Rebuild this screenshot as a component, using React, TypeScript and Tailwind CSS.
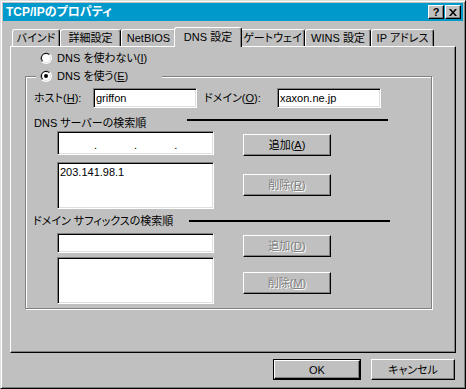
import React from "react";

const raised =
  "border border-t-white border-l-white border-r-black border-b-black shadow-[inset_-1px_-1px_0_#808080]";
const sunken =
  "border border-t-[#808080] border-l-[#808080] border-r-white border-b-white shadow-[inset_1px_1px_0_#000,inset_-1px_-1px_0_#dfdfdf] bg-white";

const Radio: React.FC<{ checked?: boolean }> = ({ checked }) => (
  <svg width="12" height="12" viewBox="0 0 12 12" className="shrink-0">
    <circle cx="6" cy="6" r="6" fill="#fff" />
    <path d="M1.76 10.24 A6 6 0 0 1 10.24 1.76 Z" fill="#808080" />
    <circle cx="6" cy="6" r="5" fill="#dfdfdf" />
    <path d="M2.46 9.54 A5 5 0 0 1 9.54 2.46 Z" fill="#000" />
    <circle cx="6" cy="6" r="4" fill="#fff" />
    {checked && <circle cx="6" cy="6" r="2" fill="#000" />}
  </svg>
);

const Key: React.FC<{ k: string }> = ({ k }) => (
  <>
    (<span className="underline underline-offset-1">{k}</span>)
  </>
);

const Button: React.FC<{
  label: string;
  k?: string;
  disabled?: boolean;
  className?: string;
}> = ({ label, k, disabled, className = "" }) => (
  <div
    className={`${raised} h-[22px] w-[88px] flex items-center justify-center ${
      disabled ? "text-[#808080] [text-shadow:1px_1px_0_#fff]" : "text-black"
    } ${className}`}
  >
    {label}
    {k && <Key k={k} />}
  </div>
);

const tabs = [
  { name: "バインド", w: "w-[48px]" },
  { name: "詳細設定", w: "w-[61px]" },
  { name: "NetBIOS", w: "w-[55px]" },
  { name: "DNS 設定", w: "w-[68px]", active: true },
  { name: "ゲートウェイ", w: "w-[65px]" },
  { name: "WINS 設定", w: "w-[66px]" },
  { name: "IP アドレス", w: "w-[63px]" },
];

export default function App() {
  return (
    <div className="w-[466px] h-[389px] bg-[#c0c0c0] border border-t-[#dfdfdf] border-l-[#dfdfdf] border-r-black border-b-black shadow-[inset_1px_1px_0_#fff,inset_-1px_-1px_0_#808080] p-[2px] flex flex-col text-[11px] leading-[12px] text-black whitespace-nowrap [font-feature-settings:'palt'] [font-family:'Liberation_Sans','Noto_Sans_CJK_JP',sans-serif]">
      {/* title bar */}
      <div className="h-[18px] bg-[#0099cc] flex items-center pl-[3px] pr-[2px]">
        <span className="text-white font-bold text-[12px]">TCP/IPのプロパティ</span>
        <div className="ml-auto flex gap-[1px]">
          <div className={`${raised} w-[16px] h-[14px] bg-[#c0c0c0] flex items-center justify-center font-bold text-[11px]`}>
            ?
          </div>
          <div className={`${raised} w-[16px] h-[14px] bg-[#c0c0c0] flex items-center justify-center`}>
            <svg width="8" height="7" viewBox="0 0 8 7">
              <path d="M0 0h2l2 2.5L6 0h2L5 3.5 8 7H6L4 4.5 2 7H0l3-3.5z" fill="#000" />
            </svg>
          </div>
        </div>
      </div>

      {/* tabs */}
      <div className="flex items-end mt-[6px] ml-[9px] h-[19px]">
        {tabs.map((t) =>
          t.active ? (
            <div
              key={t.name}
              className={`${t.w} h-[20px] -mx-[2px] -mb-[1px] relative z-10 bg-[#c0c0c0] border-t border-l border-r border-t-white border-l-white border-r-black rounded-t-[3px] shadow-[inset_-1px_0_0_#808080] flex items-center justify-center pb-[2px]`}
            >
              {t.name}
            </div>
          ) : (
            <div
              key={t.name}
              className={`${t.w} h-[17px] border-t border-l border-r border-t-white border-l-white border-r-black rounded-t-[3px] shadow-[inset_-1px_0_0_#808080] flex items-center justify-center`}
            >
              {t.name}
            </div>
          )
        )}
      </div>

      {/* tab panel */}
      <div className="ml-[7px] w-[446px] h-[307px] border border-t-white border-l-white border-r-black border-b-black shadow-[inset_-1px_-1px_0_#808080] flex flex-col">
        <div className="mt-[5px] ml-[29px] h-[12px] flex items-center gap-[5px]">
          <Radio />
          <span>
            DNS を使わない<Key k="I" />
          </span>
        </div>

        {/* group box */}
        <div className="relative ml-[14px] mt-[12px] w-[407px] h-[233px] border border-[#808080] shadow-[1px_1px_0_#fff,inset_1px_1px_0_#fff] flex flex-col">
          <div className="absolute left-[10px] top-[-8px] w-[126px] h-[14px] pl-[4px] bg-[#c0c0c0] flex items-center gap-[5px]">
            <Radio checked />
            <span>
              DNS を使う<Key k="E" />
            </span>
          </div>

          <div className="mt-[11px] pl-[8px] h-[20px] flex items-center">
            <span className="w-[59px]">
              ホスト<Key k="H" />:
            </span>
            <div className={`${sunken} w-[104px] h-[20px] pl-[2px] flex items-center`}>griffon</div>
            <span className="ml-[7px] w-[73px]">
              ドメイン<Key k="O" />:
            </span>
            <div className={`${sunken} w-[104px] h-[20px] pl-[2px] flex items-center`}>xaxon.ne.jp</div>
          </div>

          <div className="mt-[9px] pl-[8px] h-[12px] flex items-start">
            <span className="w-[153px]">DNS サーバーの検索順</span>
            <div className="w-[201px] h-[2px] bg-black mt-[2px]" />
          </div>

          <div className="mt-[2px] pl-[31px] flex">
            <div className="w-[157px] flex flex-col">
              <div className={`${sunken} h-[24px] flex items-center pl-[36px] gap-[37px] pt-[3px]`}>
                <span>.</span>
                <span>.</span>
                <span>.</span>
              </div>
              <div className={`${sunken} mt-[7px] h-[47px] pl-[2px] pt-[3px]`}>203.141.98.1</div>
            </div>
            <div className="ml-[29px] flex flex-col">
              <Button label="追加" k="A" className="mt-[3px]" />
              <Button label="削除" k="R" disabled className="mt-[18px]" />
            </div>
          </div>

          <div className="mt-[6px] pl-[7px] h-[12px] flex items-start">
            <span className="w-[156px]">ドメイン サフィックスの検索順</span>
            <div className="w-[201px] h-[2px] bg-black mt-[5px]" />
          </div>

          <div className="mt-[6px] pl-[31px] flex">
            <div className="w-[157px] flex flex-col">
              <div className={`${sunken} h-[20px]`} />
              <div className={`${sunken} mt-[4px] h-[47px]`} />
            </div>
            <div className="ml-[29px] flex flex-col">
              <Button label="追加" k="D" disabled className="mt-[2px]" />
              <Button label="削除" k="M" disabled className="mt-[15px]" />
            </div>
          </div>
        </div>
      </div>

      {/* dialog buttons */}
      <div className="mt-[6px] pr-[8px] flex justify-end gap-[10px]">
        <div className="w-[88px] h-[21px] border border-black">
          <div className={`${raised} h-full flex items-center justify-center`}>OK</div>
        </div>
        <div className={`${raised} w-[84px] h-[21px] flex items-center justify-center`}>キャンセル</div>
      </div>
    </div>
  );
}
